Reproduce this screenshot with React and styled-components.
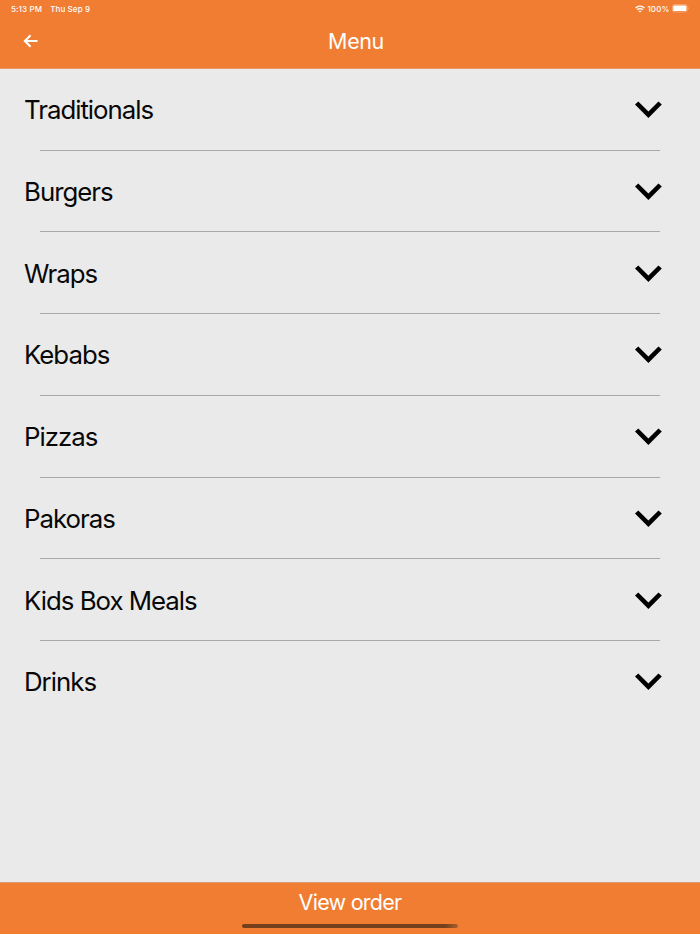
import styled, { createGlobalStyle } from 'styled-components';

const GlobalStyle = createGlobalStyle`
  * {
    box-sizing: border-box;
  }

  body {
    margin: 0;
    font-family: Inter, sans-serif;
    background-color: #eaeaea;
  }
`;

const Screen = styled.div`
  display: flex;
  flex-direction: column;
  height: 934px;
  overflow: hidden;
`;

const Header = styled.header`
  height: 69px;
  flex-shrink: 0;
  background-color: #f07d31;
  border-bottom: 1px solid #ec9a63;
  color: white;
`;

const StatusBar = styled.div`
  display: flex;
  justify-content: space-between;
  align-items: center;
  height: 17px;
  padding: 0 11px;
  font-size: 8px;
  font-weight: 500;
  letter-spacing: 0.12px;
`;

const StatusGroup = styled.div`
  display: flex;
  align-items: center;
  gap: ${(props) => props.$gap};
`;

const NavBar = styled.div`
  display: grid;
  grid-template-columns: 60px 1fr 48px;
  align-items: center;
  height: 48px;
`;

const BackButton = styled.button`
  display: flex;
  padding: 0 0 0 23px;
  border: none;
  background: none;
  color: white;
`;

const Title = styled.h1`
  margin: 0;
  font-size: 21.5px;
  font-weight: 400;
  line-height: 26px;
  letter-spacing: -0.4px;
  text-align: center;
`;

const MenuList = styled.main`
  flex: 1;
`;

const MenuItem = styled.section`
  height: 81.75px;
  padding: 0 38px 0 24px;
`;

const ItemRow = styled.div`
  display: flex;
  justify-content: space-between;
  align-items: center;
  height: 80.6px;
  padding-top: 1.6px;
`;

const ItemName = styled.h2`
  margin: 0;
  font-size: 25.8px;
  font-weight: 400;
  line-height: 32px;
  letter-spacing: -1px;
  color: #080808;
`;

const Divider = styled.div`
  height: 1px;
  margin: 0 2px 0 16px;
  background-color: #a9a9a9;
`;

const OrderButton = styled.button`
  display: flex;
  flex-direction: column;
  align-items: center;
  flex-shrink: 0;
  height: 52px;
  padding: 6px 0 0;
  border: none;
  border-top: 1px solid #dc9a72;
  background-color: #f07d31;
  color: white;
  font-family: inherit;
  font-size: 21.5px;
  line-height: 26px;
  letter-spacing: -0.75px;
`;

const HomeIndicator = styled.div`
  width: 216px;
  height: 4px;
  margin-top: 9.4px;
  border-radius: 2px;
  background: linear-gradient(90deg, #743f1b 94%, #a9612d);
`;

const categories = [
  'Traditionals',
  'Burgers',
  'Wraps',
  'Kebabs',
  'Pizzas',
  'Pakoras',
  'Kids Box Meals',
  'Drinks',
];

function WifiIcon() {
  return (
    <svg width="10" height="8" viewBox="0 0 10 8" fill="none" stroke="white">
      <path d="M0.6 3C3 0.5 7 0.5 9.4 3" strokeWidth="1.4" />
      <path d="M2.2 4.8C3.8 3.2 6.2 3.2 7.8 4.8" strokeWidth="1.3" />
      <path d="M3.5 6C4.4 5.2 5.6 5.2 6.5 6L5 7.5Z" fill="white" stroke="none" />
    </svg>
  );
}

function BatteryIcon() {
  return (
    <svg width="17" height="9" viewBox="0 0 17 9">
      <rect x="0.4" y="0.6" width="14.8" height="7.4" rx="2" fill="none" stroke="white" strokeOpacity="0.45" strokeWidth="0.7" />
      <rect x="1.2" y="1.5" width="13.2" height="5.6" rx="1.2" fill="white" />
      <path d="M15.9 3V5.6C16.8 5.2 16.8 3.4 15.9 3Z" fill="white" fillOpacity="0.5" />
    </svg>
  );
}

function ArrowIcon() {
  return (
    <svg width="15" height="14" viewBox="0 0 15 14" fill="none" stroke="white" strokeWidth="2">
      <path d="M7.6 1.2L1.8 7L7.6 12.8M2 7H14.5" />
    </svg>
  );
}

function ChevronIcon() {
  return (
    <svg width="27" height="18" viewBox="0 0 27 18">
      <path d="M3.3 0.6L13.4 10.5L23.5 0.6L26.8 3.6L13.4 17L0 3.6Z" fill="black" />
    </svg>
  );
}

export default function App() {
  return (
    <>
      <GlobalStyle />
      <Screen>
        <Header>
          <StatusBar>
            <StatusGroup $gap="8px">
              <span>5:13 PM</span>
              <span>Thu Sep 9</span>
            </StatusGroup>
            <StatusGroup $gap="2.5px">
              <WifiIcon />
              <span>100%</span>
              <BatteryIcon />
            </StatusGroup>
          </StatusBar>
          <NavBar>
            <BackButton aria-label="Back">
              <ArrowIcon />
            </BackButton>
            <Title>Menu</Title>
          </NavBar>
        </Header>
        <MenuList>
          {categories.map((name, index) => (
            <MenuItem key={name}>
              <ItemRow>
                <ItemName>{name}</ItemName>
                <ChevronIcon />
              </ItemRow>
              {index < categories.length - 1 && <Divider />}
            </MenuItem>
          ))}
        </MenuList>
        <OrderButton>
          View order
          <HomeIndicator />
        </OrderButton>
      </Screen>
    </>
  );
}
